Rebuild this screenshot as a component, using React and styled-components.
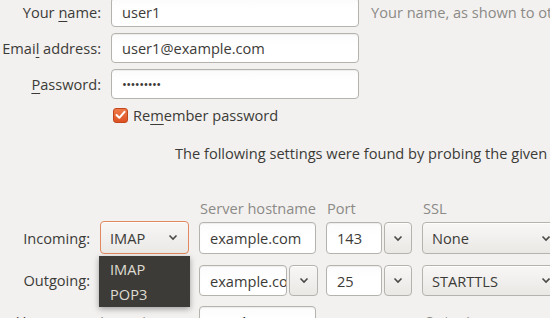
import React from "react";
import styled, { createGlobalStyle } from "styled-components";

const Global = createGlobalStyle`
  html, body { margin: 0; padding: 0; }
  body {
    width: 550px; height: 318px; overflow: hidden;
    background: #f2f1f0;
    font-family: "Open Sans", "Noto Sans", sans-serif;
    font-size: 14.6px;
    color: #3c3b37;
  }
`;

const Page = styled.div`
  width: 550px;
  height: 318px;
  overflow: hidden;
  position: relative;
`;

const IdentityGrid = styled.div`
  display: grid;
  grid-template-columns: 101px 248px auto;
  grid-auto-rows: 30px;
  column-gap: 10px;
  row-gap: 6px;
  margin-top: -3px;
  align-items: center;
`;

const Label = styled.label`
  text-align: right;
  white-space: nowrap;
  color: ${(p) => (p.$muted ? "#8c8a86" : "#3c3b37")};
  u { text-decoration: underline; text-underline-offset: 3px; }
`;

const Entry = styled.div`
  box-sizing: border-box;
  height: ${(p) => p.$h || 30}px;
  flex: ${(p) => (p.$w ? `0 0 ${p.$w}px` : "1 1 auto")};
  border: 1px solid #b5b3ae;
  border-radius: 4px;
  background: linear-gradient(#fbfbfb, #ffffff 40%);
  box-shadow: inset 0 1px 1px rgba(0,0,0,0.06);
  padding: 0 10px;
  display: flex;
  align-items: center;
  overflow: hidden;
  white-space: nowrap;
  color: #3c3b37;
  min-width: 0;
`;

const Dots = styled.span`
  font-size: 13px;
  letter-spacing: -0.6px;
`;

const Hint = styled.span`
  color: #8c8a86;
  white-space: nowrap;
  padding-left: 2px;
`;

const CheckRow = styled.div`
  display: flex;
  align-items: center;
  gap: 5px;
  margin-top: 6px;
  height: 20px;
  padding-left: 113px;
  u { text-decoration: underline; text-underline-offset: 3px; }
`;

const CheckBox = styled.span`
  box-sizing: border-box;
  width: 15px;
  height: 15px;
  border-radius: 3px;
  background: linear-gradient(#f07a4a, #dc5223);
  border: 1px solid #c2461b;
  display: flex;
  align-items: center;
  justify-content: center;
`;

const Info = styled.div`
  margin-top: 18px;
  line-height: 20px;
  padding-left: 175px;
  white-space: nowrap;
`;

const ServerGrid = styled.div`
  display: grid;
  grid-template-columns: 90px 89px 117px 86px 140px;
  grid-template-rows: 24px 32px 42px 40px;
  column-gap: 10px;
  margin-top: 35px;
  align-items: end;
`;

const Header = styled.div`
  align-self: start;
  line-height: 20px;
  color: #8c8a86;
  white-space: nowrap;
  padding-left: 1px;
`;

const RowLabel = styled(Label)`
  align-self: center;
  line-height: ${(p) => p.$lh || 20}px;
`;

const Ctl = styled.div`
  height: ${(p) => p.$h}px;
  display: flex;
  gap: 2px;
  position: relative;
  min-width: 0;
`;

const Button = styled.div`
  box-sizing: border-box;
  height: 100%;
  flex: ${(p) => (p.$w ? `0 0 ${p.$w}px` : "1 1 auto")};
  border: 1px solid ${(p) => (p.$focus ? "#e0895f" : "#b5b3ae")};
  border-radius: 4px;
  background: linear-gradient(#f8f7f6, #e9e8e5);
  box-shadow: inset 0 1px 0 rgba(255,255,255,0.8);
  display: flex;
  align-items: center;
  justify-content: ${(p) => (p.$w ? "center" : "space-between")};
  padding: ${(p) => (p.$w ? "0" : "0 10px 0 9px")};
  white-space: nowrap;
  color: #3c3b37;
`;

const Menu = styled.div`
  position: absolute;
  top: calc(100% + 2px);
  left: -1px;
  width: 91px;
  padding-top: 1px;
  background: #3c3b37;
  color: #dfdbd2;
  box-shadow: 0 2px 6px rgba(0,0,0,0.35);
  z-index: 2;
`;

const MenuItem = styled.div`
  height: 25px;
  line-height: 25px;
  padding-left: 11px;
`;

const BottomCell = styled.div`
  align-self: start;
  margin-top: 10px;
  height: 30px;
  display: flex;
  align-items: center;
  justify-content: ${(p) => (p.$right ? "flex-end" : "flex-start")};
  padding-left: ${(p) => p.$pl || 0}px;
  white-space: nowrap;
`;

const Chevron = () => (
  <svg width="10" height="7" viewBox="0 0 10 7">
    <polyline points="1.5,1.5 5,5 8.5,1.5" fill="none" stroke="#4a4946" strokeWidth="1.6" />
  </svg>
);

const Check = () => (
  <svg width="11" height="10" viewBox="0 0 11 10">
    <polyline points="1.5,5 4.3,7.8 9.5,1.8" fill="none" stroke="#fff" strokeWidth="2" strokeLinecap="round" strokeLinejoin="round" />
  </svg>
);

export default function App() {
  return (
    <Page>
      <Global />
      <IdentityGrid>
        <Label>Your <u>n</u>ame:</Label>
        <Entry>user1</Entry>
        <Hint>Your name, as shown to others</Hint>
        <Label>Emai<u>l</u> address:</Label>
        <Entry>user1@example.com</Entry>
        <span />
        <Label><u>P</u>assword:</Label>
        <Entry><Dots>•••••••••</Dots></Entry>
        <span />
      </IdentityGrid>
      <CheckRow>
        <CheckBox><Check /></CheckBox>
        <span>Re<u>m</u>ember password</span>
      </CheckRow>
      <Info>The following settings were found by probing the given server</Info>
      <ServerGrid>
        <span />
        <span />
        <Header>Server hostname</Header>
        <Header>Port</Header>
        <Header>SSL</Header>

        <RowLabel>Incoming:</RowLabel>
        <Ctl $h={33}>
          <Button $focus>
            <span>IMAP</span>
            <Chevron />
          </Button>
          <Menu>
            <MenuItem>IMAP</MenuItem>
            <MenuItem>POP3</MenuItem>
          </Menu>
        </Ctl>
        <Ctl $h={32}>
          <Entry $h={32}>example.com</Entry>
        </Ctl>
        <Ctl $h={32}>
          <Entry $h={32} $w={56}>143</Entry>
          <Button $w={28}><Chevron /></Button>
        </Ctl>
        <Ctl $h={32}>
          <Button>
            <span>None</span>
            <Chevron />
          </Button>
        </Ctl>

        <RowLabel style={{ alignSelf: "end" }} $lh={31}>Outgoing:</RowLabel>
        <span />
        <Ctl $h={31}>
          <Entry $h={31} $w={88}>example.com</Entry>
          <Button $w={29}><Chevron /></Button>
        </Ctl>
        <Ctl $h={31}>
          <Entry $h={31} $w={56}>25</Entry>
          <Button $w={28}><Chevron /></Button>
        </Ctl>
        <Ctl $h={31}>
          <Button>
            <span>STARTTLS</span>
            <Chevron />
          </Button>
        </Ctl>

        <BottomCell $right>Username:</BottomCell>
        <BottomCell><Label $muted>Incoming:</Label></BottomCell>
        <BottomCell><Entry>user1</Entry></BottomCell>
        <span />
        <BottomCell $pl={2}><Label $muted>Outgoing:</Label></BottomCell>
      </ServerGrid>
    </Page>
  );
}
